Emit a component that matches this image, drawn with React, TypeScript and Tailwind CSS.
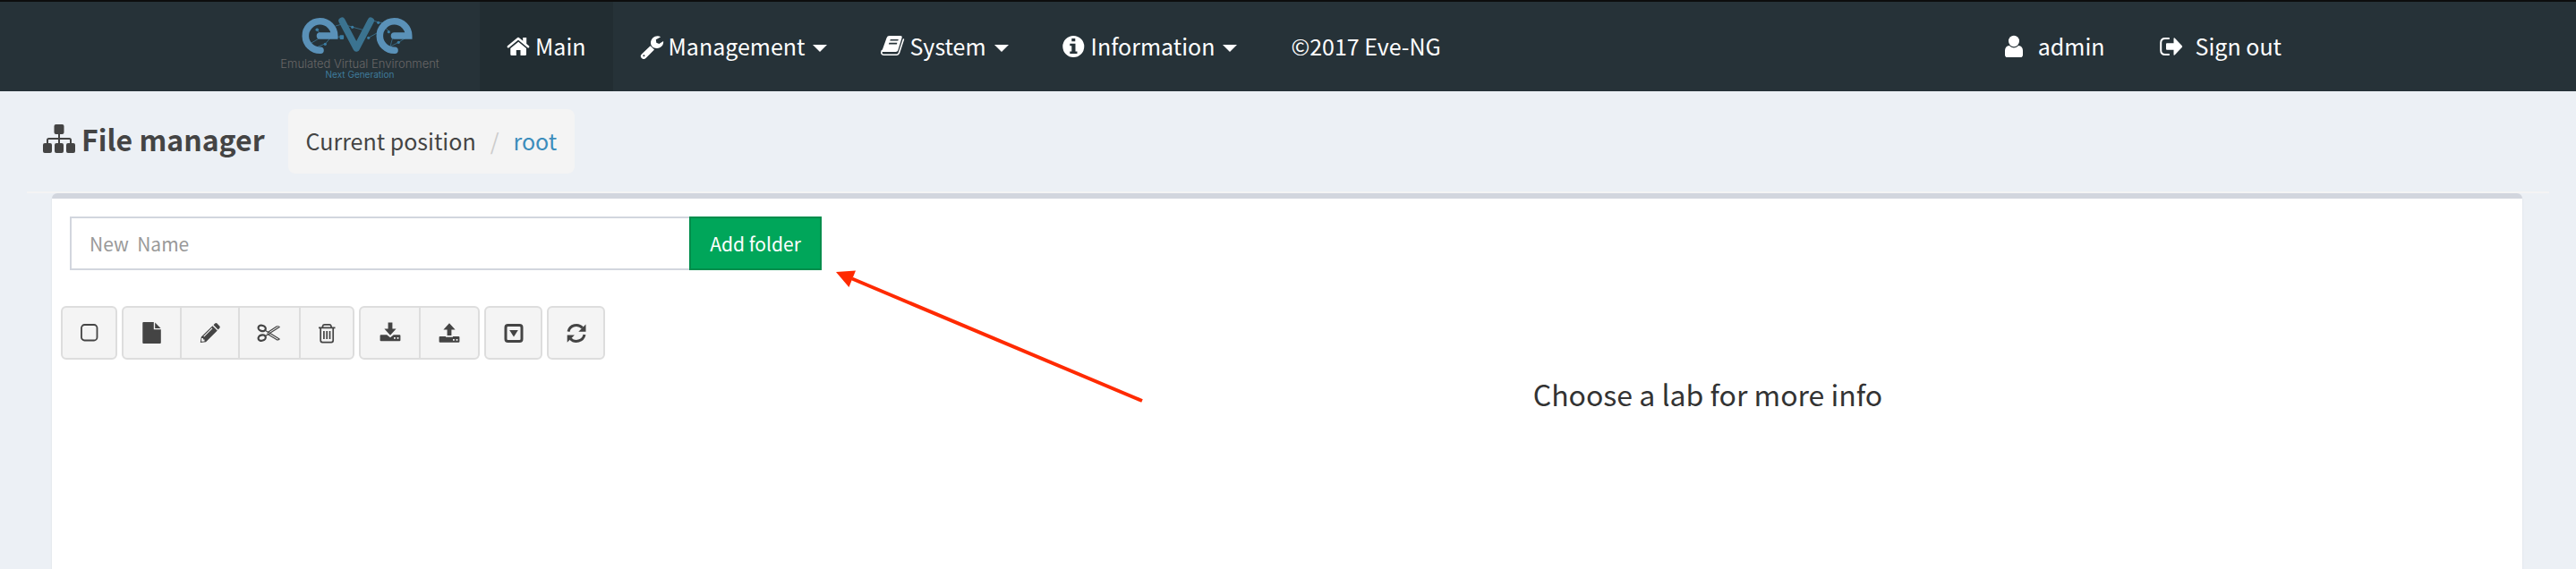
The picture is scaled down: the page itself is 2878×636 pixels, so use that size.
import type { ReactNode } from "react";

function Icon({ children, className = "" }: { children: ReactNode; className?: string }) {
  return (
    <svg viewBox="0 0 28 28" className={`size-7 shrink-0 ${className}`} fill="currentColor" aria-hidden="true">
      {children}
    </svg>
  );
}

function HomeIcon() {
  return (
    <Icon>
      <path d="M1.8 14.2 13 5l11.2 9.2" fill="none" stroke="currentColor" strokeWidth="2.4" strokeLinecap="round" strokeLinejoin="round" />
      <path d="M18.2 4h4v7.4l-4-3.3zM13.2 8.8l8.8 7.3v6.6q0 1.3-1.3 1.3h-5.2v-6h-4.700v6H5.600q-1.300 0-1.300-1.300v-6.600z" />
    </Icon>
  );
}

function WrenchIcon() {
  return (
    <Icon>
      <path fillRule="evenodd" d="M11.6 13.200 1.900 22.400a3.200 3.200 0 0 0 4.600 4.600l9.500-9.600zM4.400 23.300a1 1 0 1 1 0 2 1 1 0 0 1 0-2z" />
      <path d="M23.200 3.200C18 .600 12.300 4.300 12 9.600c-.100 4 3 6.600 7 6.400 4.400-.200 7.700-3.600 7.100-8l-4.700 2.900-3.100-1.100-.500-3.500z" />
    </Icon>
  );
}

function BookIcon() {
  return (
    <Icon>
      <path fillRule="evenodd" d="M6.600 4.200Q7.400 2 9.600 2H22q2.200 0 1.600 2.200l-4.300 14q-.500 1.800-2.500 1.800H2.200Q1 20 1.500 18.400zM10.800 6l-.500 1.600h9L19.800 6zM9.400 9.800l-.500 1.600h9l.500-1.600z" />
      <path d="M1.400 18.500C.200 21.500 1 23.200 3.400 23.200h14.400q2 0 2.600-1.900l5-15.200" fill="none" stroke="currentColor" strokeWidth="1.600" strokeLinecap="round" />
    </Icon>
  );
}

function InfoIcon() {
  return (
    <Icon>
      <path fillRule="evenodd" d="M12.300 2a12 12 0 1 1 0 24 12 12 0 0 1 0-24zM10.300 5v3.300h4V5zM8.300 10.800v2.400h2v6.300h-2V22h8.200v-2.500h-2v-8.700z" />
    </Icon>
  );
}

function UserIcon() {
  return (
    <Icon>
      <ellipse cx="14" cy="8" rx="6" ry="6.200" />
      <path d="M8.800 13q2.200 2.400 5.200 2.400t5.200-2.400q4.800.700 4.800 5.600v4.600q0 2.800-2.800 2.800H6.800Q4 26 4 23.200v-4.600Q4 13.700 8.800 13z" />
    </Icon>
  );
}

function SignOutIcon() {
  return (
    <Icon>
      <path d="M11.800 5H7Q2.200 5 2.200 9.800v8.400Q2.200 23 7 23h4.800" fill="none" stroke="currentColor" strokeWidth="2" />
      <path d="M9 10.300h7.500V4.800q.500-1 1.400-.1l8 8.600q.600.700 0 1.400l-8 8.600q-.900.900-1.400-.1v-5.500H9q-1 0-1-1v-5.400q0-1 1-1z" />
    </Icon>
  );
}

function SitemapIcon() {
  return (
    <svg viewBox="0 0 36 32" className="h-8 w-9 shrink-0" fill="currentColor" aria-hidden="true">
      <rect x="12.500" y="0" width="11" height="11" rx="2" />
      <rect x="0" y="21" width="10" height="11" rx="2" />
      <rect x="13" y="21" width="10" height="11" rx="2" />
      <rect x="26" y="21" width="10" height="11" rx="2" />
      <path d="M18 10v12M5 22v-4.500Q5 16 6.500 16h23q1.500 0 1.500 1.500V22" fill="none" stroke="currentColor" strokeWidth="2" />
    </svg>
  );
}

function Caret() {
  return (
    <svg viewBox="0 0 16 8" className="mt-1 ml-[5px] h-2 w-4" fill="currentColor" aria-hidden="true">
      <path d="M0 0h16L8 8z" />
    </svg>
  );
}

const squareIcon = (
  <Icon>
    <rect x="5" y="5" width="17.500" height="17.500" rx="3.500" fill="none" stroke="currentColor" strokeWidth="1.800" />
  </Icon>
);

const fileIcon = (
  <Icon>
    <path d="M4.300 2h11.500v8.300h8V25q0 1-1 1H4.300q-1 0-1-1V3q0-1 1-1z" />
    <path d="M17.200 2.600 23.600 8.900h-6.400z" />
  </Icon>
);

const pencilIcon = (
  <Icon>
    <path fillRule="evenodd" d="m2.800 25 1-6.400L16.400 6.200l5.400 5.300L9 24.200zM4.300 20l-.300 3.700 3.500-.2v-2H6V20zM15.600 8.400l-9.300 9.400.800.800 9.300-9.400z" />
    <path d="m17.500 5.200 1.700-1.600q1.200-1 2.300 0l2.800 2.900q1 1.100 0 2.200l-1.600 1.700z" />
  </Icon>
);

const scissorsIcon = (
  <Icon>
    <g fill="none" stroke="currentColor">
      <ellipse cx="5.700" cy="8.900" rx="4.200" ry="3.100" strokeWidth="2.200" transform="rotate(18 5.700 8.900)" />
      <ellipse cx="5.700" cy="19.600" rx="4.200" ry="3.100" strokeWidth="2.200" transform="rotate(-18 5.700 19.600)" />
      <path d="M9.200 11.200 12.500 13.200 22 7q1.800-.7 3.200.500L12 16 9.200 17.800M12.500 15.800l9.500 5.800q1.800.700 3.200-.5l-10-6.300" strokeWidth="1.200" strokeLinejoin="round" />
      <circle cx="13.100" cy="14.600" r="1.300" strokeWidth="1" />
    </g>
  </Icon>
);

const trashIcon = (
  <Icon>
    <g fill="none" stroke="currentColor" strokeWidth="1.700">
      <path d="M5 8.400h18.500M9.500 8V6.500Q10 4.800 11.600 4.800H17q1.600 0 2 1.700V8M7.200 8.400V22.600q0 2 2 2h10q2 0 2-2V8.400" />
      <path d="M10.900 12v9M14.200 12v9M17.500 12v9" />
    </g>
  </Icon>
);

const downloadIcon = (
  <Icon>
    <path d="M11.600 2.600h4.800v7h4.200L14 16.700 7.400 9.600h4.200z" />
    <path fillRule="evenodd" d="M3.600 16.200h6.600l3.800 3 3.800-3h6.600q1 0 1 1v5q0 1-1 1H3.600q-1 0-1-1v-5q0-1 1-1zM18 19v1.800h1.800V19zM21.600 19v1.800h1.800V19z" />
  </Icon>
);

const uploadIcon = (
  <Icon>
    <path d="M11.600 17h4.800v-6.500h4.200L14 3.300l-6.600 7.200h4.200z" />
    <path fillRule="evenodd" d="M3.600 18h6.400v.800h8V18h6.400q1 0 1 1v4.800q0 1-1 1H3.600q-1 0-1-1V19q0-1 1-1zM18 21v1.800h1.800V21zM21.600 21v1.800h1.800V21z" />
  </Icon>
);

const collapseIcon = (
  <Icon>
    <rect x="5" y="5.500" width="18" height="18" rx="2.500" fill="none" stroke="currentColor" strokeWidth="3" />
    <path d="M9.200 11h9.600L14 18.400z" />
  </Icon>
);

const refreshIcon = (
  <Icon>
    <path d="M5 12.600a9.200 9.200 0 0 1 15.800-4M23 16a9.200 9.200 0 0 1-15.800 4.400" fill="none" stroke="currentColor" strokeWidth="3" />
    <path d="M24.500 4.500v8.200h-8.200zM3.700 24.800v-8.300h8.200z" />
  </Icon>
);

function Logo() {
  return (
    <a href="#" className="flex w-[237px] flex-col pl-4 pt-4">
      <div className="flex w-[174px] flex-col items-center whitespace-nowrap">
        <svg viewBox="45 18 127 43" className="mr-1.5 h-[43px] w-[127px]" fill="none" role="img" aria-label="eve">
          <g stroke="#3b7695" strokeWidth=".8">
            <path d="M63 33.500 68 39M57 48l10-6M72 49.500l6-7M60 54l12-5M84 29l7-2M78 42l12-1M95 28l8 2.300 11 3M121 42l9-5M126 23l6 2 10 1M138 29l6 7M154 47.500l-8 4M154 47.500l8-5M148 41l-3 11" />
          </g>
          <g stroke="#5a91b8" strokeWidth="7.600" strokeLinecap="round">
            <path d="M67 56.200A16.200 16.200 0 1 1 82.700 40H66.500" />
            <path d="M150 56.200A16.200 16.200 0 1 1 165.700 40H149.500" />
          </g>
          <path d="M91 23.200 107.200 54 123.300 23.200" stroke="#3b7390" strokeWidth="7.400" strokeLinecap="round" strokeLinejoin="round" />
          <g fill="#3b7da3">
            <circle cx="63.300" cy="33.300" r="1.800" />
            <circle cx="72.300" cy="49.300" r="1.600" />
            <rect x="88.500" y="39.300" width="4.600" height="4.600" rx=".8" />
            <circle cx="102.700" cy="30.300" r="1.600" />
            <circle cx="120.700" cy="42.300" r="1.600" />
            <circle cx="131.700" cy="25.300" r="1.600" />
            <circle cx="143.300" cy="35.700" r="1.600" />
            <circle cx="154.300" cy="47.300" r="1.600" />
          </g>
        </svg>
        <span className="mt-1 font-['Inter'] text-[13px] leading-[13px] font-light text-[#696767]">Emulated Virtual Environment</span>
        <span className="font-['Inter'] text-[10px] leading-[10px] text-[#3f7b9b]">Next Generation</span>
      </div>
    </a>
  );
}

function NavLink({ icon, label, caret, active }: { icon?: ReactNode; label: string; caret?: boolean; active?: boolean }) {
  return (
    <a href="#" className={`flex items-center gap-1 px-[30px] ${active ? "bg-[#222d32]" : ""}`}>
      {icon}
      <span className="pb-0.5">{label}</span>
      {caret && <Caret />}
    </a>
  );
}

function UserLink({ icon, label }: { icon: ReactNode; label: string }) {
  return (
    <a href="#" className="flex items-center gap-[13px] px-[30px]">
      {icon}
      <span className="pb-0.5">{label}</span>
    </a>
  );
}

function ToolButton({ label, icon, className }: { label: string; icon: ReactNode; className: string }) {
  return (
    <button
      type="button"
      aria-label={label}
      className={`flex h-[60px] items-center justify-center border-2 border-[#ddd] bg-[#f4f4f4] ${className}`}
    >
      {icon}
    </button>
  );
}

export default function App() {
  return (
    <div className="flex min-h-screen flex-col bg-[#ecf0f5] font-['Noto_Sans_CJK_SC',sans-serif] text-[25px] leading-9 text-[#444]">
      <header className="border-t-2 border-[#0d0d0d] bg-[#263238] text-white">
        <nav className="mx-auto flex h-[100px] max-w-[2340px] items-stretch px-[30px] whitespace-nowrap">
          <Logo />
          <NavLink icon={<HomeIcon />} label="Main" active />
          <NavLink icon={<WrenchIcon />} label="Management" caret />
          <NavLink icon={<BookIcon />} label="System" caret />
          <NavLink icon={<InfoIcon />} label="Information" caret />
          <NavLink label="©2017 Eve-NG" />
          <div className="ml-auto flex">
            <UserLink icon={<UserIcon />} label="admin" />
            <UserLink icon={<SignOutIcon />} label="Sign out" />
          </div>
        </nav>
      </header>

      <section className="mx-[30px] flex items-center border-b-2 border-[#f4f4f4] py-5 pl-[18px]">
        <h1 className="flex items-center gap-[7px] pb-1.5 text-[32px] leading-10 font-bold">
          <SitemapIcon />
          File manager
        </h1>
        <ol className="ml-[26px] flex h-[72px] items-center rounded-lg bg-[#f4f4f4] px-5 pb-0.5">
          <li>Current position</li>
          <li className="px-4 text-[#ccc]" aria-hidden="true">/</li>
          <li>
            <a href="#" className="text-[#3c8dbc]">root</a>
          </li>
        </ol>
      </section>

      <main className="relative mr-[60px] ml-[58px] flex flex-1 rounded-t-md border-t-[6px] border-[#d2d6de] bg-white shadow-[0_2px_2px_rgba(0,0,0,0.1)]">
        <div className="w-1/3 pt-5 pl-2.5">
          <form className="mr-[60px] ml-2.5 flex text-[21px]">
            <input
              type="text"
              aria-label="New folder name"
              placeholder="New  Name"
              className="h-[60px] min-w-0 flex-1 border-2 border-r-0 border-[#d2d6de] bg-white px-5 placeholder:text-[#999]"
            />
            <button type="button" className="h-[60px] w-[148px] border-2 border-[#008d4c] bg-[#00a65a] text-white">
              Add folder
            </button>
          </form>
          <div className="mt-10 flex gap-[5px]">
            <ToolButton label="Select all" icon={squareIcon} className="w-[63px] rounded-md" />
            <div className="flex">
              <ToolButton label="New lab" icon={fileIcon} className="w-[67px] rounded-l-md" />
              <ToolButton label="Rename" icon={pencilIcon} className="-ml-0.5 w-[67px]" />
              <ToolButton label="Move" icon={scissorsIcon} className="-ml-0.5 w-[70px]" />
              <ToolButton label="Delete" icon={trashIcon} className="-ml-0.5 w-[62px] rounded-r-md" />
            </div>
            <div className="flex">
              <ToolButton label="Import" icon={downloadIcon} className="w-[69px] rounded-l-md" />
              <ToolButton label="Export" icon={uploadIcon} className="-ml-0.5 w-[68px] rounded-r-md" />
            </div>
            <ToolButton label="Expand" icon={collapseIcon} className="w-[65px] rounded-md" />
            <ToolButton label="Refresh" icon={refreshIcon} className="w-[65px] rounded-md" />
          </div>
        </div>
        <div className="w-2/3 pt-[198px] pl-5 text-center">
          <p className="text-[32px] leading-10 text-[#333]">Choose a lab for more info</p>
        </div>

        <svg viewBox="0 0 344 150" className="pointer-events-none absolute top-[79px] left-[876px] h-[150px] w-[344px]" aria-hidden="true">
          <path d="M18 10.500 342 147" stroke="#ff2a00" strokeWidth="4" fill="none" />
          <path d="M0 3 22 1.500 14.500 20z" fill="#ff2a00" />
        </svg>
      </main>
    </div>
  );
}
